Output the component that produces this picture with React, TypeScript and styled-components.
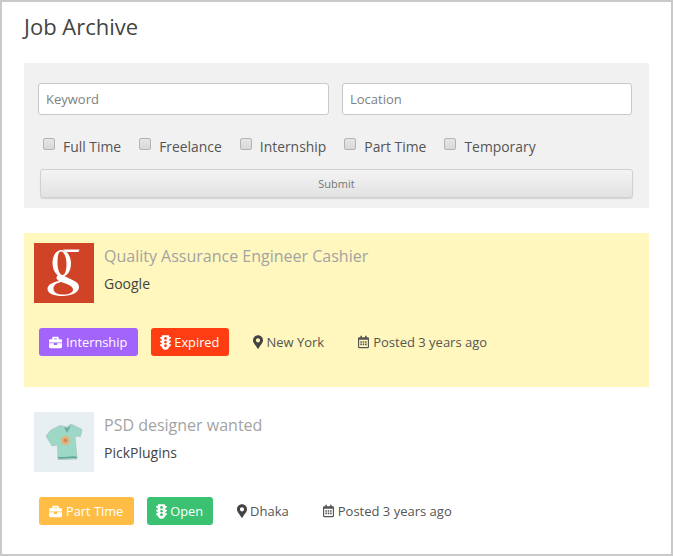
import React from 'react';
import styled, { createGlobalStyle } from 'styled-components';
import { FaBriefcase, FaTrafficLight, FaMapMarkerAlt, FaRegCalendarAlt } from 'react-icons/fa';

const GlobalStyle = createGlobalStyle`
  html, body {
    margin: 0;
    padding: 0;
    background: #fff;
  }
  * {
    box-sizing: border-box;
  }
`;

const Frame = styled.div`
  width: 673px;
  height: 556px;
  overflow: hidden;
  padding: 0 22px;
  border: 2px solid #c9c9c9;
  font-family: 'Open Sans', 'Liberation Sans', sans-serif;
  color: #444;
`;

const Title = styled.h1`
  margin: 0;
  padding-top: 9px;
  height: 61px;
  font-size: 22px;
  line-height: 30px;
  font-weight: 400;
  color: #444;
`;

const SearchPanel = styled.form`
  width: 625px;
  height: 145px;
  background: #f1f1f1;
  padding: 20px 17px 0 14px;
`;

const InputRow = styled.div`
  display: grid;
  grid-template-columns: 291px 290px;
  column-gap: 13px;
`;

const TextInput = styled.input`
  height: 32px;
  width: 100%;
  border: 1px solid #c8c8c8;
  border-radius: 3px;
  background: #fff;
  padding: 0 7px;
  font-family: inherit;
  font-size: 13px;
  outline: none;
  &::placeholder {
    color: #808080;
    opacity: 1;
  }
`;

const CheckRow = styled.div`
  display: flex;
  margin: 20px 0 0 5px;
  height: 24px;
  gap: 18px;
  align-items: center;
`;

const CheckLabel = styled.label`
  display: flex;
  align-items: center;
  font-size: 13.9px;
  line-height: 24px;
  color: #555;
`;

const CheckBox = styled.span`
  width: 12px;
  height: 12px;
  margin: -6px 8px 0 0;
  border: 1px solid #b4b4b4;
  border-radius: 2px;
  background: linear-gradient(#e4e6e6, #d8dada);
  flex: none;
`;

const SubmitButton = styled.button`
  display: block;
  width: 593px;
  height: 29px;
  margin: 10px 0 0 2px;
  padding: 0;
  border: 1px solid #d0d0d0;
  border-radius: 3px;
  background: linear-gradient(#f4f4f4, #e2e2e2);
  box-shadow: 0 1px 1px rgba(0, 0, 0, 0.12);
  font-family: inherit;
  font-size: 11px;
  color: #777;
`;

const JobCard = styled.article<{ $highlight?: boolean }>`
  width: 625px;
  height: 154px;
  margin-top: ${(p) => (p.$highlight ? '25px' : '15px')};
  padding: 10px;
  background: ${(p) => (p.$highlight ? '#fff7bd' : '#fff')};
`;

const CardHead = styled.div`
  display: flex;
  gap: 10px;
  height: 60px;
`;

const Logo = styled.div<{ $bg: string }>`
  width: 60px;
  height: 60px;
  flex: none;
  background: ${(p) => p.$bg};

  svg {
    display: block;
  }
`;

const JobTitle = styled.div`
  margin-top: 2px;
  font-size: 16px;
  line-height: 22px;
  color: #a3a3a3;
`;

const Company = styled.div`
  margin-top: 7px;
  font-size: 14px;
  line-height: 20px;
  color: #444;
`;

const MetaRow = styled.div`
  display: flex;
  align-items: center;
  margin: 25px 0 0 5px;
  height: 28px;
`;

const Badge = styled.span<{ $bg: string; $gap: number; $tight?: boolean }>`
  display: inline-flex;
  align-items: center;
  height: 28px;
  padding: 0 ${(p) => (p.$tight ? 10 : 11)}px 0 ${(p) => (p.$tight ? 9 : 10)}px;
  margin-right: ${(p) => p.$gap}px;
  border-radius: 3px;
  background: ${(p) => p.$bg};
  color: #fff;
  font-size: 12.8px;
`;

const BriefcaseIcon = styled(FaBriefcase)`
  width: 13px;
  height: 13px;
  margin-right: 4px;
  flex: none;
`;

const LightIcon = styled(FaTrafficLight)`
  width: 11px;
  height: 15px;
  margin-right: 3px;
  flex: none;
`;

const MetaItem = styled.span<{ $gap: number }>`
  display: inline-flex;
  align-items: center;
  margin-right: ${(p) => p.$gap}px;
  font-size: 13px;
  color: #555;
`;

const PinIcon = styled(FaMapMarkerAlt)`
  width: 10px;
  height: 14px;
  margin-right: 3px;
  color: #444;
  flex: none;
`;

const CalendarIcon = styled(FaRegCalendarAlt)`
  width: 11px;
  height: 14px;
  margin-right: 4px;
  color: #555;
  flex: none;
`;

const GoogleLogo = () => (
  <svg width="60" height="60" viewBox="0 0 60 60">
    <g fill="#fff">
      <path
        fillRule="evenodd"
        d="M27.500 7C22 7 18.500 13 18.500 20 18.500 27.500 22.500 33.500 28 33.500 33.500 33.500 37 27.500 37 20.500 37 13.500 33 7 27.500 7ZM27 8.500C30 8.500 32.500 14 32.500 21 32.500 27.500 31 32 28.500 32 25.500 32 23.500 26 23.500 19.500 23.500 13 24.500 8.500 27 8.500Z"
      />
      <path d="M29 6.500H45.500L44.500 9H32Z" />
      <path
        fillRule="evenodd"
        d="M24.500 31.500C21.500 34 22 36 25 38 18 39.500 13.500 42 13.500 46 13.500 50.500 20 53 28.500 53 38 53 45 49.500 45 44 45 40 41.500 38.500 36.500 36L29 32.500ZM27 39C33 41 39 43 39 46.500 39 50 35 51.500 29.500 51.500 23 51.500 19.500 49.500 19.500 45.500 19.500 42 22.500 40 27 39Z"
      />
    </g>
  </svg>
);

const ShirtLogo = () => (
  <svg width="60" height="60" viewBox="0 0 60 60">
    <path
      d="M12 24L17 18 26 13.500 33 15 37 12 48 17.500 46.500 24.500 41 24 43 47 24 47.500 23.500 33 18 34Z"
      fill="#9dd8c6"
      stroke="#a9c4c0"
      strokeWidth="0.8"
    />
    <path d="M30 15.500L33 21 37 13.500 33.500 16Z" fill="#6eaaa0" />
    <circle cx="31.500" cy="28.500" r="4.500" fill="#e5b27a" />
    <circle cx="31.500" cy="28.500" r="2" fill="#c98a62" />
    <path d="M24 45.500C30 47 37 44 43 45.500" fill="none" stroke="#62a596" strokeWidth="1.600" />
  </svg>
);

const filters = ['Full Time', 'Freelance', 'Internship', 'Part Time', 'Temporary'];

const App: React.FC = () => (
  <Frame>
    <GlobalStyle />
    <Title>Job Archive</Title>
    <SearchPanel>
      <InputRow>
        <TextInput placeholder="Keyword" />
        <TextInput placeholder="Location" />
      </InputRow>
      <CheckRow>
        {filters.map((name) => (
          <CheckLabel key={name}>
            <CheckBox />
            {name}
          </CheckLabel>
        ))}
      </CheckRow>
      <SubmitButton type="button">Submit</SubmitButton>
    </SearchPanel>

    <JobCard $highlight>
      <CardHead>
        <Logo $bg="#d14327">
          <GoogleLogo />
        </Logo>
        <div>
          <JobTitle>Quality Assurance Engineer Cashier</JobTitle>
          <Company>Google</Company>
        </div>
      </CardHead>
      <MetaRow>
        <Badge $bg="#a264fb" $gap={13}>
          <BriefcaseIcon />
          Internship
        </Badge>
        <Badge $bg="#ff3d12" $gap={24} $tight>
          <LightIcon />
          Expired
        </Badge>
        <MetaItem $gap={34}>
          <PinIcon />
          New York
        </MetaItem>
        <MetaItem $gap={0}>
          <CalendarIcon />
          Posted 3 years ago
        </MetaItem>
      </MetaRow>
    </JobCard>

    <JobCard>
      <CardHead>
        <Logo $bg="#e7eff2">
          <ShirtLogo />
        </Logo>
        <div>
          <JobTitle>PSD designer wanted</JobTitle>
          <Company>PickPlugins</Company>
        </div>
      </CardHead>
      <MetaRow>
        <Badge $bg="#ffbd45" $gap={13}>
          <BriefcaseIcon />
          Part Time
        </Badge>
        <Badge $bg="#3ac272" $gap={24} $tight>
          <LightIcon />
          Open
        </Badge>
        <MetaItem $gap={34}>
          <PinIcon />
          Dhaka
        </MetaItem>
        <MetaItem $gap={0}>
          <CalendarIcon />
          Posted 3 years ago
        </MetaItem>
      </MetaRow>
    </JobCard>
  </Frame>
);

export default App;
